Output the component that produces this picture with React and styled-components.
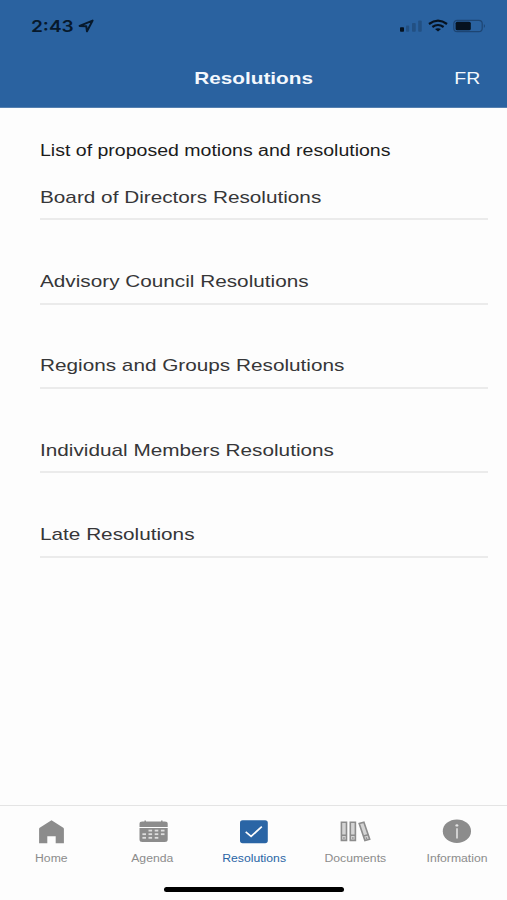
import React, { useState } from "react";
import styled, { createGlobalStyle } from "styled-components";

const GlobalStyle = createGlobalStyle`
  * {
    box-sizing: border-box;
  }

  body {
    margin: 0;
    background-color: #fdfdfd;
    font-family: "Liberation Sans", Arial, sans-serif;
  }
`;

const Screen = styled.div`
  display: flex;
  flex-direction: column;
  width: 507px;
  height: 900px;
  overflow: hidden;
  background-color: #fdfdfd;
`;

const HeaderStyle = styled.header`
  height: 108px;
  flex-shrink: 0;
  background-color: #2a62a0;
  border-bottom: 1px solid #5580b0;
`;

const StatusBar = styled.div`
  display: flex;
  align-items: center;
  justify-content: space-between;
  height: 52px;
  padding: 0 20px 0 31px;
`;

const StatusLeft = styled.div`
  display: flex;
  align-items: center;
  color: #07192c;
`;

/* all the labels are in a wide face */
const Wide = styled.span`
  display: inline-block;
  white-space: nowrap;
  transform: scaleX(1.22);
  transform-origin: ${(props) => props.$origin || "left"};
`;

const Time = styled(Wide)`
  width: 55px;
  margin-right: -8px;
  font-family: Inter, "Liberation Sans", sans-serif;
  font-size: 16px;
  line-height: 20px;
  font-weight: 600;
  transform: scaleX(1.19);
`;

const TitleBar = styled.div`
  display: grid;
  grid-template-columns: 1fr auto 1fr;
  align-items: center;
  height: 54px;
  padding: 0 27px;
  color: #f4f8fd;
`;

const Title = styled.h1`
  grid-column: 2;
  margin: 0;
  font-size: 17px;
  line-height: 20px;
  font-weight: bold;
`;

const LangButton = styled.button`
  justify-self: end;
  padding: 0;
  border: none;
  background: none;
  color: inherit;
  font-family: inherit;
  font-size: 16px;
  line-height: 20px;
`;

const Content = styled.main`
  flex: 1;
  padding: 33px 19px 0 40px;
`;

const Intro = styled.p`
  margin: 0;
  color: #1c1c1c;
  font-size: 16px;
  line-height: 20px;
`;

const List = styled.ul`
  display: flex;
  flex-direction: column;
  gap: 40.3px;
  margin: 15.4px 0 0;
  padding: 0;
  list-style: none;
`;

const Row = styled.li`
  height: 44px;
  padding-top: 11.4px;
  border-bottom: 2px solid #ebebeb;
  color: #363638;
  font-size: 17px;
  line-height: 20px;
`;

const TabBar = styled.nav`
  display: grid;
  grid-template-columns: repeat(5, 1fr);
  height: 76px;
  padding-top: 12px;
  border-top: 1px solid #e4e4e4;
`;

const Tab = styled.button`
  display: flex;
  flex-direction: column;
  align-items: center;
  gap: 7px;
  padding: 0 0 0 1px;
  border: none;
  background: none;
  color: ${(props) => (props.$active ? "#2a65a5" : "#8c8c8c")};
  font-family: inherit;
  font-size: 10px;
  line-height: 12px;
`;

const TabIcon = styled.svg`
  width: 32px;
  height: 28px;
`;

const HomeArea = styled.div`
  display: flex;
  justify-content: center;
  height: 19px;
  padding: 6px 0 0 1px;
`;

const HomeIndicator = styled.div`
  width: 180px;
  height: 5px;
  border-radius: 3px;
  background-color: #000;
`;

const LocationIcon = () => (
  <svg width="17" height="14" viewBox="0 0 17 14" fill="none" stroke="#07192c" strokeWidth="2" strokeLinejoin="round">
    <path d="M1.6 6.9 L14.6 1.6 L9 12.3 L8.3 7.3 Z" />
  </svg>
);

const StatusIcons = () => (
  <svg width="88" height="16" viewBox="0 0 88 16">
    <rect x="1" y="9.3" width="4" height="4.4" rx="0.8" fill="#06121f" />
    <g fill="#225083">
      <rect x="7" y="7.6" width="3.2" height="6.1" rx="0.8" />
      <rect x="13" y="5" width="3.7" height="8.7" rx="0.8" />
      <rect x="19.2" y="2.4" width="3.5" height="11.3" rx="0.8" />
    </g>
    <g fill="none" stroke="#06121f" strokeWidth="2.2">
      <path d="M30 6 Q39 -0.8 48 6" />
      <path d="M33.4 9 Q39 5 44.6 9" />
    </g>
    <path d="M36 11 Q39 9.3 42 11 L39 13.5 Z" fill="#06121f" />
    <rect x="54.8" y="2.3" width="28.4" height="11.4" rx="3.4" fill="none" stroke="#1d4573" strokeWidth="1.2" />
    <rect x="56.6" y="3.7" width="15.2" height="8.6" rx="1.6" fill="#06121f" />
    <path d="M84.9 6 Q87 8 84.9 10 Z" fill="#1d4573" />
  </svg>
);

const HomeIcon = () => (
  <TabIcon viewBox="0 0 32 28">
    <path d="M16.5 2.3 L28.3 9.8 Q28.9 10.3 28.9 11 V25.2 H20.7 V18.2 H12.3 V25.2 H4.1 V11 Q4.1 10.3 4.7 9.8 Z" fill="currentColor" />
  </TabIcon>
);

/* day cells, the first row starts one cell later */
const days = [
  [12, 11.7], [18.2, 11.7], [24.4, 11.7],
  [5.9, 15.3], [12, 15.3], [18.2, 15.3], [24.4, 15.3],
  [5.9, 18.9], [12, 18.9], [18.2, 18.9],
];

const AgendaIcon = () => (
  <TabIcon viewBox="0.5 0 32 28">
    <path d="M3 8.9 V5.8 Q3 3.4 5.8 3.4 H28.3 Q31.2 3.4 31.2 5.8 V8.9 Z M3 9.9 H31.2 V21.4 Q31.2 23.9 28.3 23.9 H5.8 Q3 23.9 3 21.4 Z" fill="currentColor" />
    <path d="M8.7 2.4 V5 M25.3 2.4 V5" stroke="currentColor" strokeWidth="1.5" />
    {days.map(([x, y]) => (
      <rect key={`${x}-${y}`} x={x} y={y} width="3.6" height="1.8" fill="#dedede" />
    ))}
  </TabIcon>
);

const ResolutionsIcon = () => (
  <TabIcon viewBox="0.5 0 32 28">
    <rect x="2.5" y="2.3" width="27.8" height="22.9" rx="2.6" fill="currentColor" />
    <path d="M8.2 13.8 L13.6 18.4 L24.3 8.6" fill="none" stroke="#fdfdfd" strokeWidth="1.7" />
  </TabIcon>
);

const DocumentsIcon = () => (
  <TabIcon viewBox="0.5 0 32 28" fill="#d4d4d4" stroke="currentColor" strokeWidth="1.6">
    <path d="M2.9 4.3 H8 V22.4 H2.9 Z M11.8 4.3 H16.9 V22.4 H11.8 Z M20.7 5.5 L25.4 4.3 L31.2 21.2 L26.4 22.6 Z" />
    <path d="M3 17.2 H8 M11.8 17.2 H16.8 M25 18 L29.7 16.8" />
    <path d="M4.7 20 H6.2 M13.6 20 H15.1 M27.2 20.3 L28.7 19.9" />
  </TabIcon>
);

const InformationIcon = () => (
  <TabIcon viewBox="0.5 0 32 28">
    <ellipse cx="16.4" cy="13.2" rx="14.1" ry="11.8" fill="currentColor" />
    <ellipse cx="16.4" cy="7.4" rx="1.5" ry="1.2" fill="#e4e4e4" />
    <path d="M16.5 10.3 V20.5" stroke="#d8d8d8" strokeWidth="1.8" />
  </TabIcon>
);

const resolutions = [
  "Board of Directors Resolutions",
  "Advisory Council Resolutions",
  "Regions and Groups Resolutions",
  "Individual Members Resolutions",
  "Late Resolutions",
];

const tabs = [
  { name: "Home", Icon: HomeIcon },
  { name: "Agenda", Icon: AgendaIcon },
  { name: "Resolutions", Icon: ResolutionsIcon },
  { name: "Documents", Icon: DocumentsIcon },
  { name: "Information", Icon: InformationIcon },
];

const App = () => {
  const [activeTab, setActiveTab] = useState("Resolutions");

  return (
    <Screen>
      <GlobalStyle />
      <HeaderStyle>
        <StatusBar>
          <StatusLeft>
            <Time>2:43</Time>
            <LocationIcon />
          </StatusLeft>
          <StatusIcons />
        </StatusBar>
        <TitleBar>
          <Title>
            <Wide $origin="center">Resolutions</Wide>
          </Title>
          <LangButton>
            <Wide $origin="right">FR</Wide>
          </LangButton>
        </TitleBar>
      </HeaderStyle>

      <Content>
        <Intro>
          <Wide>List of proposed motions and resolutions</Wide>
        </Intro>
        <List>
          {resolutions.map((name) => (
            <Row key={name}>
              <Wide>{name}</Wide>
            </Row>
          ))}
        </List>
      </Content>

      <TabBar>
        {tabs.map(({ name, Icon }) => (
          <Tab key={name} $active={name === activeTab} onClick={() => setActiveTab(name)}>
            <Icon />
            <Wide $origin="center">{name}</Wide>
          </Tab>
        ))}
      </TabBar>
      <HomeArea>
        <HomeIndicator />
      </HomeArea>
    </Screen>
  );
};

export default App;
